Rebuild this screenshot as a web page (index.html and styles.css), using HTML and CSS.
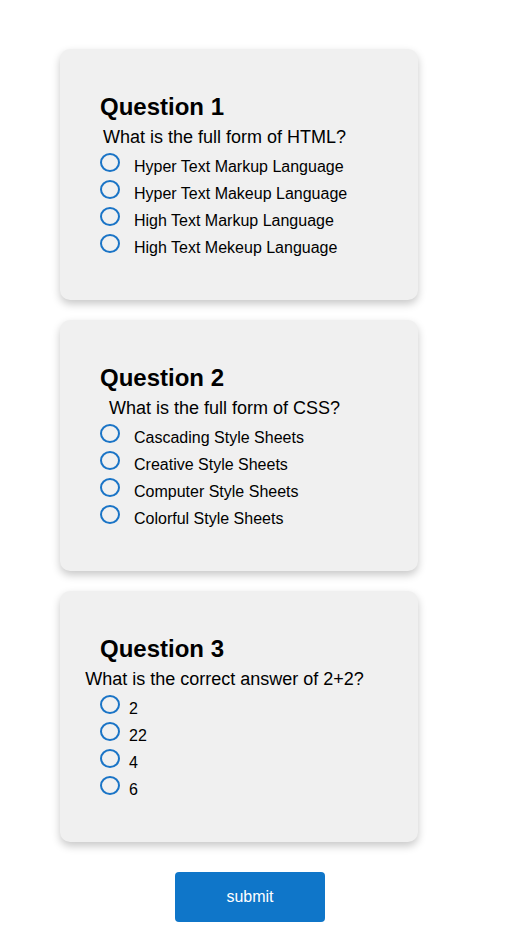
FILE: index.html
```html
<!DOCTYPE html>
<html lang="en">
<head>
<meta charset="utf-8">
<title>Quiz</title>
<link rel="stylesheet" href="styles.css">
</head>
<body>
<main class="quiz">
  <section class="card">
    <h2 class="card-title">Question 1</h2>
    <div class="question"><span>What is the full form of HTML?</span></div>
    <ul class="options spaced">
      <li class="option"><span class="radio"></span><span class="label">Hyper Text Markup Language</span></li>
      <li class="option"><span class="radio"></span><span class="label">Hyper Text Makeup Language</span></li>
      <li class="option"><span class="radio"></span><span class="label">High Text Markup Language</span></li>
      <li class="option"><span class="radio"></span><span class="label">High Text Mekeup Language</span></li>
    </ul>
  </section>
  <section class="card">
    <h2 class="card-title">Question 2</h2>
    <div class="question"><span>What is the full form of CSS?</span></div>
    <ul class="options spaced">
      <li class="option"><span class="radio"></span><span class="label">Cascading Style Sheets</span></li>
      <li class="option"><span class="radio"></span><span class="label">Creative Style Sheets</span></li>
      <li class="option"><span class="radio"></span><span class="label">Computer Style Sheets</span></li>
      <li class="option"><span class="radio"></span><span class="label">Colorful Style Sheets</span></li>
    </ul>
  </section>
  <section class="card">
    <h2 class="card-title">Question 3</h2>
    <div class="question"><span>What is the correct answer of 2+2?</span></div>
    <ul class="options">
      <li class="option"><span class="radio"></span><span class="label">2</span></li>
      <li class="option"><span class="radio"></span><span class="label">22</span></li>
      <li class="option"><span class="radio"></span><span class="label">4</span></li>
      <li class="option"><span class="radio"></span><span class="label">6</span></li>
    </ul>
  </section>
  <div class="actions">
    <button class="submit" type="button">submit</button>
  </div>
</main>
</body>
</html>
```

FILE: styles.css
```css
html, body {
  margin: 0;
  padding: 0;
  background: #ffffff;
}

body {
  font-family: "Liberation Sans", Arial, sans-serif;
  color: #000000;
}

.quiz {
  padding: 49px 0 20px 60px;
  display: flex;
  flex-direction: column;
  gap: 20px;
  width: 358px;
}

.card {
  box-sizing: border-box;
  width: 358px;
  background: #f0f0f0;
  border-radius: 10px;
  box-shadow: 0 4px 8px rgba(0, 0, 0, 0.22);
  padding: 44px 69px 39px 40px;
}

.card-title {
  margin: 0 0 5px 0;
  font-size: 24px;
  line-height: 28px;
  font-weight: bold;
}

.question {
  display: flex;
  justify-content: center;
  font-size: 18px;
  line-height: 22px;
  margin-bottom: 5px;
}

.question span {
  white-space: nowrap;
}

.options {
  list-style: none;
  margin: 0;
  padding: 0;
}

.option {
  display: flex;
  align-items: flex-start;
  height: 27px;
  font-size: 16px;
  line-height: 27px;
}

.radio {
  box-sizing: border-box;
  flex: none;
  width: 20px;
  height: 19px;
  border: 2px solid #1a74c6;
  border-radius: 50%;
  background: transparent;
}

.label {
  margin-left: 9px;
  white-space: nowrap;
}

.spaced .label {
  margin-left: 14px;
}

.actions {
  display: flex;
  padding-left: 115px;
  margin-top: 10px;
}

.submit {
  width: 150px;
  height: 50px;
  border: none;
  border-radius: 4px;
  background: #0f76c9;
  color: #ffffff;
  font-family: "Liberation Sans", Arial, sans-serif;
  font-size: 16px;
  cursor: pointer;
}
```
